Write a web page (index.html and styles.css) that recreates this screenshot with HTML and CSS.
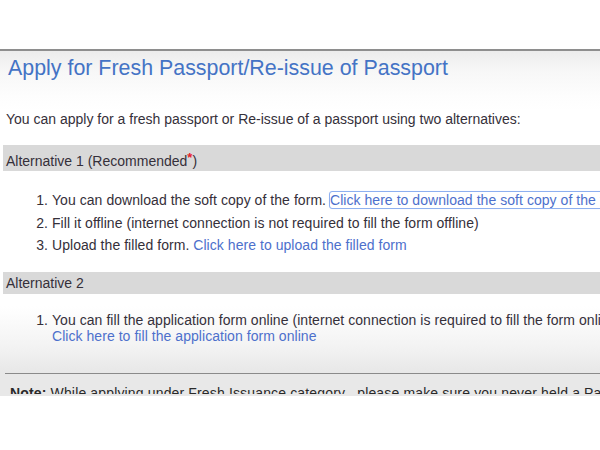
FILE: index.html
```html
<!DOCTYPE html>
<html>
<head>
<meta charset="utf-8">
<link rel="stylesheet" href="styles.css">
</head>
<body>
<div class="top"></div>
<div class="page">
  <h1 class="title">Apply for Fresh Passport/Re-issue of Passport</h1>
  <p class="intro">You can apply for a fresh passport or Re-issue of a passport using two alternatives:</p>
  <div class="bar">Alternative 1 (Recommended<span class="star">*</span>)</div>
  <ol class="list">
    <li>You can download the soft copy of the form. <a class="link focus">Click here to download the soft copy of the form</a></li>
    <li>Fill it offline (internet connection is not required to fill the form offline)</li>
    <li>Upload the filled form. <a class="link">Click here to upload the filled form</a></li>
  </ol>
  <div class="bar bar2">Alternative 2</div>
  <ol class="list list2">
    <li>You can fill the application form online (internet connection is required to fill the form online)<br><a class="link">Click here to fill the application form online</a></li>
  </ol>
  <div class="foot">
    <div class="note"><b>Note:</b> While applying under Fresh Issuance category , please make sure you never held a Passport</div>
  </div>
</div>
</body>
</html>
```
FILE: styles.css
```css
html, body {
  margin: 0;
  padding: 0;
  background: #fff;
  overflow: hidden;
  width: 600px;
  height: 450px;
}
body {
  font-family: "Liberation Sans", Arial, sans-serif;
  color: #35303a;
}
.top {
  height: 49px;
  background: #fff;
}
.page {
  border-top: 2px solid #8e8e8e;
  background: linear-gradient(#ececec 0, #f7f7f7 20px, #fdfdfd 45px, #fff 60px, #fff 255px, #f3f3f3 295px, #e8e8e8 320px);
  white-space: nowrap;
  overflow: hidden;
  height: 345px;
}
.title {
  margin: 0;
  padding: 4px 0 0 8px;
  font-size: 21.4px;
  font-weight: normal;
  color: #4473c5;
  line-height: 26px;
}
.intro {
  margin: 0;
  padding: 30px 0 0 6px;
  font-size: 14px;
  line-height: 16px;
}
.bar {
  margin: 18px 0 0 3px;
  background: #d9d9d9;
  height: 26px;
  line-height: 26px;
  font-size: 14px;
  padding-left: 3px;
}
.star {
  color: #e8202a;
  font-size: 13px;
  font-weight: bold;
  vertical-align: 4px;
}
.list {
  margin: 18px 0 0 0;
  padding-left: 52px;
  font-size: 14px;
  line-height: 22.5px;
  letter-spacing: 0.05px;
}
.link {
  color: #4d70cc;
}
.focus {
  outline: 1px solid #8eb0f0;
  outline-offset: 0;
  border-radius: 2px;
  box-shadow: 0 0 2px #a9c4f5;
}
.bar2 {
  margin-top: 15px;
  height: 22px;
  line-height: 22px;
}
.list2 {
  margin-top: 18px;
  line-height: 16px;
}
.foot {
  margin: 29px 0 0 5px;
  border-top: 1px solid #8a8a8a;
  height: 20px;
  overflow: hidden;
}
.note {
  padding: 11px 0 0 5px;
  font-size: 14px;
  line-height: 16px;
  letter-spacing: 0.15px;
  color: #2a2a2a;
}
```
